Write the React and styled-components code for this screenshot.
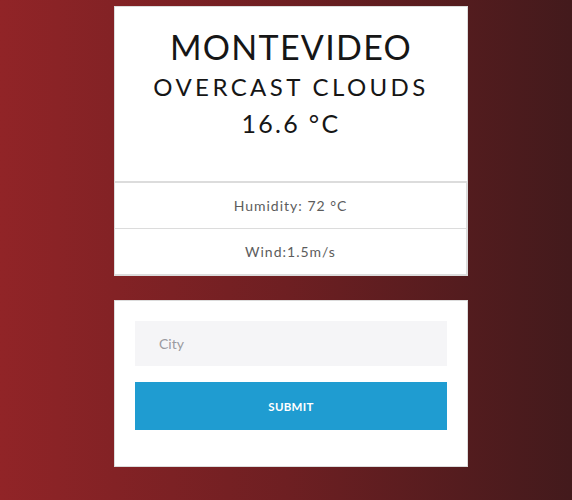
import React, { useState } from 'react'
import styled, { createGlobalStyle } from 'styled-components'

const GlobalStyle = createGlobalStyle`
html, body {
margin: 0;
padding: 0;
}
body {
min-height: 500px;
background: linear-gradient(to right, #912427 0%, #6e1f22 50%, #431a1c 100%);
font-family: Lato, "Noto Sans", sans-serif;
}
`

function App(){
const [city, setCity] = useState('')
return (
  <Page>
    <GlobalStyle />
    <Column>
      <WeatherCard>
        <CardHeader>
          <CityName>MONTEVIDEO</CityName>
          <Description>OVERCAST CLOUDS</Description>
          <Temperature>16.6 °C</Temperature>
        </CardHeader>
        <DetailList>
          <DetailItem>Humidity: 72 °C</DetailItem>
          <DetailItem>Wind:1.5m/s</DetailItem>
        </DetailList>
      </WeatherCard>

      <FormCard>
        <CityInput value={city} onChange={e => setCity(e.target.value)} placeholder="City" />
        <SubmitButton type="button">SUBMIT</SubmitButton>
      </FormCard>
    </Column>
  </Page>
)
}

const Page = styled.div`
padding: 6px 0 0 114px;
`
const Column = styled.div`
width: 354px;
display: flex;
flex-direction: column;
gap: 24px;
`
const WeatherCard = styled.div`
background-color: white;
border: 1px solid #dcdcdc;
border-bottom: none;
`
const CardHeader = styled.div`
height: 174px;
box-sizing: border-box;
padding-top: 17px;
display: flex;
flex-direction: column;
align-items: center;
color: #161616;
`
const CityName = styled.div`
font-size: 34px;
line-height: 45px;
letter-spacing: 1.3px;
`
const Description = styled.div`
font-size: 24px;
line-height: 36px;
letter-spacing: 3.4px;
`
const Temperature = styled.div`
font-size: 25px;
line-height: 36px;
letter-spacing: 2.3px;
`
const DetailList = styled.ul`
list-style: none;
margin: 0 0 0 0;
padding: 0;
border-top: 2px solid #dcdcdc;
`
const DetailItem = styled.li`
height: 45px;
display: flex;
align-items: center;
justify-content: center;
border-right: 1px solid #dcdcdc;
border-bottom: 1px solid #dcdcdc;
font-size: 14px;
letter-spacing: 1px;
color: #5c5c5c;
&:last-child {
  border-bottom: 2px solid #dcdcdc;
}
`
const FormCard = styled.div`
background-color: white;
border: 1px solid #dcdcdc;
padding: 20px 20px 36px;
display: flex;
flex-direction: column;
gap: 16px;
`
const CityInput = styled.input`
height: 45px;
box-sizing: border-box;
border: none;
outline: 0;
background-color: #f5f5f7;
padding: 0 24px;
font-family: Lato, "Noto Sans", sans-serif;
font-size: 14px;
color: #555;
&::placeholder {
  color: #9a9aa0;
}
`
const SubmitButton = styled.button`
height: 48px;
border: none;
background-color: #1f9cd1;
color: white;
font-family: Lato, "Noto Sans", sans-serif;
font-weight: 700;
font-size: 11.5px;
letter-spacing: 0.3px;
`

export default App
